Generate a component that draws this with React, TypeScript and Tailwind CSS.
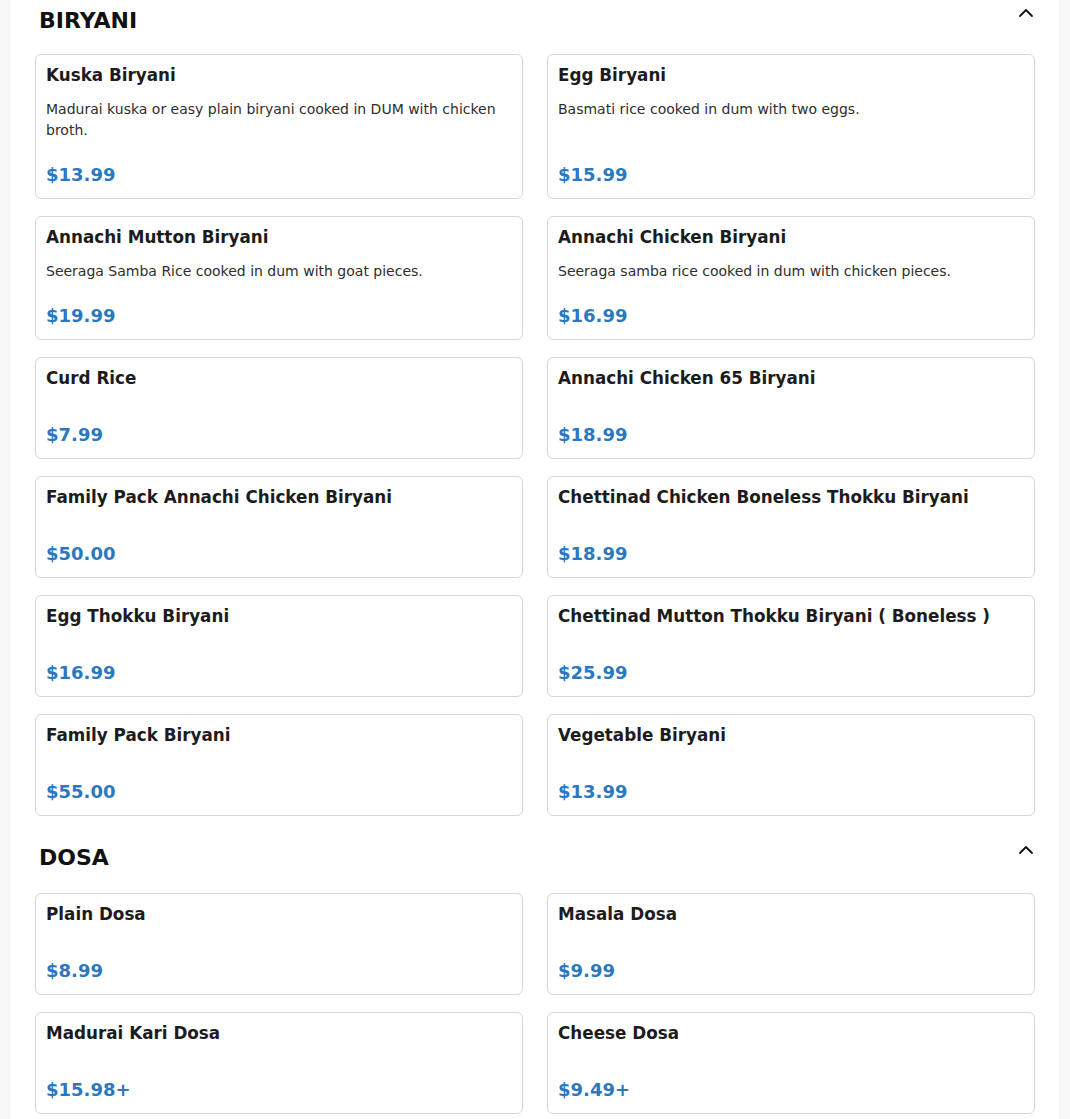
import { ChevronUp } from 'lucide-react'

type Item = { name: string; desc?: string; price: string }

const sections: { title: string; items: Item[] }[] = [
  {
    title: 'BIRYANI',
    items: [
      { name: 'Kuska Biryani', desc: 'Madurai kuska or easy plain biryani cooked in DUM with chicken broth.', price: '$13.99' },
      { name: 'Egg Biryani', desc: 'Basmati rice cooked in dum with two eggs.', price: '$15.99' },
      { name: 'Annachi Mutton Biryani', desc: 'Seeraga Samba Rice cooked in dum with goat pieces.', price: '$19.99' },
      { name: 'Annachi Chicken Biryani', desc: 'Seeraga samba rice cooked in dum with chicken pieces.', price: '$16.99' },
      { name: 'Curd Rice', price: '$7.99' },
      { name: 'Annachi Chicken 65 Biryani', price: '$18.99' },
      { name: 'Family Pack Annachi Chicken Biryani', price: '$50.00' },
      { name: 'Chettinad Chicken Boneless Thokku Biryani', price: '$18.99' },
      { name: 'Egg Thokku Biryani', price: '$16.99' },
      { name: 'Chettinad Mutton Thokku Biryani ( Boneless )', price: '$25.99' },
      { name: 'Family Pack Biryani', price: '$55.00' },
      { name: 'Vegetable Biryani', price: '$13.99' },
    ],
  },
  {
    title: 'DOSA',
    items: [
      { name: 'Plain Dosa', price: '$8.99' },
      { name: 'Masala Dosa', price: '$9.99' },
      { name: 'Madurai Kari Dosa', price: '$15.98+' },
      { name: 'Cheese Dosa', price: '$9.49+' },
    ],
  },
]

function MenuCard({ item }: { item: Item }) {
  return (
    <div className="flex flex-col rounded-md border border-[#d6d6d6] bg-white px-[10px] pt-[11px] pb-[9px]">
      <h3 className="text-[16.8px] font-bold leading-[18px] text-[#1c1c1c]">{item.name}</h3>
      {item.desc && (
        <p className="mt-[15px] text-[14px] leading-[21px] text-[#2e2e2e]">{item.desc}</p>
      )}
      <p className={`mt-auto text-[18px] font-bold leading-[28px] text-[#2b78bf] ${item.desc ? 'pt-[20px]' : 'pt-[34px]'}`}>
        {item.price}
      </p>
    </div>
  )
}

export default function App() {
  return (
    <div className="min-h-screen bg-[#f8f8f9] px-[11px]" style={{ fontFamily: '"DejaVu Sans", Verdana, sans-serif' }}>
      <div className="flex min-h-screen flex-col gap-[21px] bg-white px-6 pb-6">
        {sections.map((section, idx) => (
          <section key={section.title}>
            <div className={`flex items-start justify-between pl-1 ${idx === 0 ? 'mb-[20px]' : 'mb-[22px]'}`}>
              <h2 className="mt-[7px] text-[22px] font-bold leading-[27px] text-[#111]">{section.title}</h2>
              <ChevronUp size={24} strokeWidth={1.8} className="-mr-[3px] mt-px text-[#111]" />
            </div>
            <div className="grid grid-cols-2 gap-x-6 gap-y-[17px]">
              {section.items.map((item, i) => (
                <MenuCard key={i} item={item} />
              ))}
            </div>
          </section>
        ))}
      </div>
    </div>
  )
}
